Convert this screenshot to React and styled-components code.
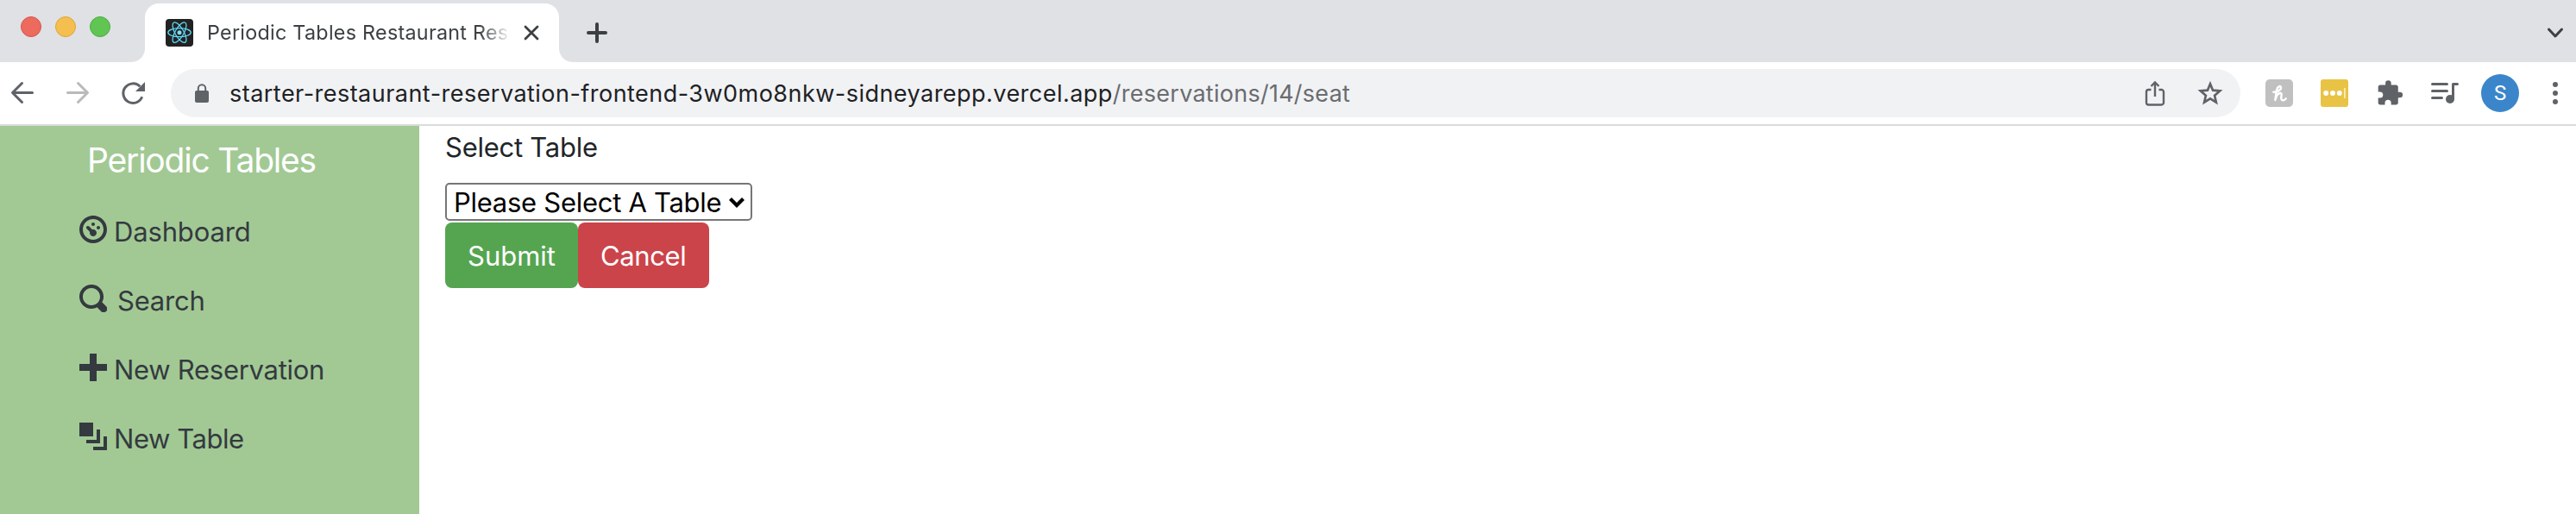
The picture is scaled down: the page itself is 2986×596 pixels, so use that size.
import React from 'react';
import styled, { createGlobalStyle } from 'styled-components';

const GlobalStyle = createGlobalStyle`
  *, *::before, *::after { box-sizing: border-box; }
  body {
    margin: 0;
    background: #fff;
    font-family: Inter, "Liberation Sans", sans-serif;
    color: #212529;
  }
`;

const Window = styled.div`
  display: flex;
  flex-direction: column;
  height: 596px;
  overflow: hidden;
`;

/* Browser chrome */

const TabStrip = styled.div`
  display: flex;
  height: 72px;
  flex: none;
  background: #dfe1e5;
`;

const TrafficLights = styled.div`
  display: flex;
  gap: 16px;
  width: 152px;
  padding: 19px 0 0 24px;
`;

const Light = styled.span`
  width: 24px;
  height: 24px;
  border-radius: 50%;
  background: ${(p) => p.$fill};
  border: 1px solid ${(p) => p.$edge};
`;

const TabCurve = styled.span`
  width: 16px;
  height: 16px;
  align-self: flex-end;
  background: radial-gradient(
    circle at ${(p) => (p.$side === 'left' ? '0 0' : '100% 0')},
    #dfe1e5 15.5px,
    #fff 16.5px
  );
`;

const Tab = styled.div`
  display: flex;
  align-items: center;
  width: 480px;
  margin-top: 4px;
  padding-left: 24px;
  border-radius: 16px 16px 0 0;
  background: #fff;
`;

const TabTitle = styled.span`
  width: 364px;
  margin-left: 16px;
  white-space: nowrap;
  font-size: 23.3px;
  line-height: 32px;
  letter-spacing: 0.28px;
  color: #3c4043;
  mask-image: linear-gradient(to right, #000 316px, transparent 352px);
`;

const NewTab = styled.div`
  display: flex;
  align-items: center;
  margin: 4px 0 0 12px;
`;

const TabSearch = styled(NewTab)`
  margin: 4px 12px 0 auto;
`;

const Toolbar = styled.div`
  display: flex;
  align-items: center;
  flex: none;
  height: 74px;
  padding: 0 8px 0 10px;
  border-bottom: 2px solid #dadbdc;
`;

const NavButtons = styled.div`
  display: flex;
  gap: 32px;
  margin-right: 28px;
`;

const Omnibox = styled.div`
  display: flex;
  align-items: center;
  flex: 1;
  height: 56px;
  padding: 0 19px 0 20px;
  border-radius: 28px;
  background: #f1f2f4;
`;

const Url = styled.div`
  flex: 1;
  margin-left: 16px;
  padding-top: 2px;
  font-size: 27px;
  line-height: 36px;
  white-space: nowrap;
  color: #202124;
  letter-spacing: 0.47px;
`;

const UrlPath = styled.span`
  color: #6a6c6f;
  letter-spacing: 0.26px;
`;

const OmniActions = styled.div`
  display: flex;
  gap: 32px;
`;

const Extensions = styled.div`
  display: flex;
  gap: 32px;
  margin: 0 26px 0 29px;
`;

const Avatar = styled.div`
  display: flex;
  align-items: center;
  justify-content: center;
  width: 44px;
  height: 44px;
  margin-right: 26px;
  border-radius: 50%;
  background: #3b86cb;
  color: #fff;
  font-family: Roboto, sans-serif;
  font-size: 24px;
  line-height: 44px;
`;

const Icon = styled.svg`
  display: block;
  flex: none;
  width: ${(p) => p.$size || 32}px;
  height: ${(p) => p.$size || 32}px;
  fill: none;
  stroke: ${(p) => p.$color || '#5f6368'};
  stroke-width: 3;
  stroke-linecap: round;
  stroke-linejoin: round;
`;

/* Page */

const Page = styled.div`
  display: flex;
  flex: 1;
`;

const Sidebar = styled.nav`
  width: 486px;
  background: #a2c994;
`;

const Brand = styled.div`
  padding: 16px 0 0 101px;
  font-size: 39px;
  line-height: 48px;
  letter-spacing: -1.2px;
  color: #fff;
`;

const Menu = styled.ul`
  margin: 19px 0 0;
  padding: 0 0 0 92px;
  list-style: none;
`;

const MenuItem = styled.li`
  display: flex;
  height: 80px;
  padding-top: 21px;
  font-size: 31px;
  line-height: 38px;
  letter-spacing: ${(p) => p.$spacing}px;
  color: #343a40;
`;

const MenuIcon = styled.svg`
  width: 32px;
  height: 32px;
  margin-right: ${(p) => p.$gap || 8}px;
  fill: currentColor;
`;

const Main = styled.main`
  padding: 1px 0 0 30px;
`;

const Label = styled.label`
  display: block;
  font-size: 31px;
  line-height: 48px;
  letter-spacing: -0.25px;
`;

const SelectWrap = styled.div`
  position: relative;
  width: 356px;
  height: 44px;
  margin: 17px 0 2px;
`;

const Select = styled.select`
  display: block;
  width: 356px;
  height: 44px;
  padding: 1px 0 0 8px;
  appearance: none;
  border: 2px solid #767676;
  border-radius: 5px;
  background: #fff;
  color: #000;
  font-family: inherit;
  font-size: 31px;
  line-height: 40px;
  letter-spacing: -0.28px;
`;

const SelectArrow = styled.svg`
  position: absolute;
  right: 8px;
  top: 15px;
  width: 20px;
  height: 16px;
  fill: none;
  stroke: #000;
  stroke-width: 4.2;
  pointer-events: none;
`;

const Actions = styled.div`
  display: flex;
`;

const Button = styled.button`
  width: ${(p) => p.$width}px;
  height: 76px;
  padding: 1px 0 0 26px;
  border: 0;
  border-radius: 8px;
  background: ${(p) => p.$bg};
  color: #fff;
  font-family: inherit;
  font-size: 31px;
  line-height: 75px;
  letter-spacing: ${(p) => p.$spacing}px;
  text-align: left;
`;

const menu = [
  {
    label: 'Dashboard',
    spacing: -0.15,
    gap: 8,
    d: 'M4 0c-2.2 0-4 1.8-4 4s1.8 4 4 4 4-1.8 4-4-1.8-4-4-4zm0 1c1.66 0 3 1.34 3 3s-1.34 3-3 3-3-1.34-3-3 1.34-3 3-3zm0 1c-.28 0-.5.22-.5.5s.22.5.5.5.5-.22.5-.5-.22-.5-.5-.5zm-1.66 1a.5.5 0 0 0-.19.84l.91.91c-.02.08-.06.16-.06.25 0 .55.45 1 1 1s1-.45 1-1-.45-1-1-1c-.09 0-.17.04-.25.06l-.91-.91a.5.5 0 0 0-.44-.16.5.5 0 0 0-.06 0zm3.16 0c-.28 0-.5.22-.5.5s.22.5.5.5.5-.22.5-.5-.22-.5-.5-.5z',
  },
  {
    label: 'Search',
    spacing: -0.2,
    gap: 12,
    d: 'M3.5 0c-1.93 0-3.5 1.57-3.5 3.5s1.57 3.5 3.5 3.5c.59 0 1.17-.14 1.66-.41a1 1 0 0 0 .13.13l1 1a1.02 1.02 0 1 0 1.44-1.44l-1-1a1 1 0 0 0-.16-.13c.27-.49.44-1.06.44-1.66 0-1.93-1.55-3.5-3.5-3.5zm0 1c1.39 0 2.5 1.11 2.5 2.5 0 .66-.24 1.27-.66 1.72-.01.01-.02.02-.03.03a1 1 0 0 0-.13.13c-.44.4-1.04.63-1.69.63-1.39 0-2.5-1.11-2.5-2.5s1.11-2.5 2.5-2.5z',
  },
  { label: 'New Reservation', spacing: -0.28, gap: 8, d: 'M3 0v3h-3v2h3v3h2v-3h3v-2h-3v-3z' },
  {
    label: 'New Table',
    spacing: -0.45,
    gap: 8,
    d: 'M0 0v4h4v-4zM5 2v3h-3v1h4v-4zM7 4v3h-3v1h4v-4z',
  },
];

const ReactLogo = () => (
  <Icon viewBox="0 0 32 32" $color="#61dafb">
    <rect width="32" height="32" rx="4" fill="#222" stroke="none" />
    <circle cx="16" cy="15.7" r="2.5" fill="#7fdcf7" stroke="none" />
    <g strokeWidth="1.25">
      {[0, 60, 120].map((a) => (
        <ellipse key={a} cx="16" cy="15.7" rx="13.2" ry="5" transform={`rotate(${a} 16 15.7)`} />
      ))}
    </g>
  </Icon>
);

export default function App() {
  return (
    <Window>
      <GlobalStyle />
      <TabStrip>
        <TrafficLights>
          <Light $fill="#ed6a5e" $edge="#d8554a" />
          <Light $fill="#f5bf4f" $edge="#dca53c" />
          <Light $fill="#61c554" $edge="#4cac3f" />
        </TrafficLights>
        <TabCurve $side="left" />
        <Tab>
          <ReactLogo />
          <TabTitle>Periodic Tables Restaurant Rese</TabTitle>
          <Icon $size={24} viewBox="0 0 24 24" $color="#3c4043">
            <path d="M5 5l14 14M19 5L5 19" strokeWidth="2.8" />
          </Icon>
        </Tab>
        <TabCurve $side="right" />
        <NewTab>
          <Icon viewBox="0 0 32 32" $color="#3c4043">
            <path d="M16 6v20M6 16h20" strokeWidth="4" />
          </Icon>
        </NewTab>
        <TabSearch>
          <Icon $size={24} viewBox="0 0 24 24" $color="#3c4043">
            <path d="M4.5 8l7.5 8 7.5-8" />
          </Icon>
        </TabSearch>
      </TabStrip>

      <Toolbar>
        <NavButtons>
          <Icon viewBox="0 0 32 32">
            <path d="M27.5 15.5H5M15.5 4.5l-11 11 11 11" />
          </Icon>
          <Icon viewBox="0 0 32 32" $color="#bababb">
            <path d="M4.5 15.5H27M16.5 4.5l11 11-11 11" />
          </Icon>
          <Icon viewBox="0 0 32 32">
            <path d="M24.3 8.3A11.3 11.3 0 1 0 26.7 20.3" strokeLinecap="butt" />
            <path d="M30 3v11H19z" fill="#5f6368" stroke="none" />
          </Icon>
        </NavButtons>
        <Omnibox>
          <Icon viewBox="0 0 32 32">
            <rect x="8" y="13" width="16" height="14" rx="2" fill="#5f6368" stroke="none" />
            <path d="M11.8 14v-3.5a4.2 4.2 0 0 1 8.4 0V14" strokeWidth="2" />
          </Icon>
          <Url>
            starter-restaurant-reservation-frontend-3w0mo8nkw-sidneyarepp.vercel.app
            <UrlPath>/reservations/14/seat</UrlPath>
          </Url>
          <OmniActions>
            <Icon viewBox="0 0 32 32">
              <path
                d="M11.5 12H8.5a2.5 2.5 0 0 0-2.5 2.5V27a2.5 2.5 0 0 0 2.5 2.5h15A2.5 2.5 0 0 0 26 27V14.5a2.5 2.5 0 0 0-2.5-2.5H20.5M16 20V4M11.5 8L16 3.5 20.500 8"
                strokeWidth="2.4"
                strokeLinecap="butt"
                strokeLinejoin="miter"
              />
            </Icon>
            <Icon viewBox="0 0 32 32">
              <path
                d="M16 5.2l3.1 7.5 8.1.7-6.1 5.3 1.8 7.9-6.9-4.2-6.9 4.2 1.8-7.9-6.1-5.3 8.1-.7z"
                strokeWidth="2.7"
                strokeLinejoin="miter"
              />
            </Icon>
          </OmniActions>
        </Omnibox>
        <Extensions>
          <Icon viewBox="0 0 32 32" $color="#fff">
            <rect width="32" height="32" rx="5" fill="#c0c0c0" stroke="none" />
            <path
              d="M9.3 14.7C13 15.2 18.5 12.5 18 9.5 17.5 6.8 14 8 13 12.5L11.3 24C12.5 19.5 15 15.8 17.5 16 20 16.2 17.5 20.5 18.5 23 19.3 25 22 24.8 23.7 22.3"
              strokeWidth="2.4"
            />
          </Icon>
          <Icon viewBox="0 0 32 32">
            <rect width="32" height="32" rx="3" fill="#e8c345" stroke="none" />
            <g fill="#fff" stroke="none">
              <circle cx="6.2" cy="16" r="3" />
              <circle cx="14" cy="16" r="3" />
              <circle cx="21.8" cy="16" r="3" />
              <rect x="27" y="10" width="1.8" height="12" fill="#fbeebb" />
            </g>
          </Icon>
          <Icon viewBox="0 0 32 32">
            <path
              d="M27.8 14.7h-2V9.3a2.700 2.7 0 0 0-2.7-2.7h-5.4V4.5a3.3 3.3 0 0 0-6.6 0v2.1H5.3a2.6 2.6 0 0 0-2.6 2.7v5.1h2a3.6 3.6 0 0 1 0 7.2h-2v5.1a2.7 2.7 0 0 0 2.6 2.7h5.2v-2a3.6 3.6 0 0 1 7.2 0v2h5.4a2.7 2.7 0 0 0 2.7-2.7v-5.4h2a3.3 3.3 0 0 0 0-6.600z"
              fill="#5f6368"
              stroke="none"
            />
          </Icon>
          <Icon viewBox="0 0 32 32">
            <path d="M1.5 5.5h17M1.5 13.5h17M1.5 21.5h11M25.5 22V5.5h5" />
            <circle cx="22" cy="23" r="5" fill="#5f6368" stroke="none" />
          </Icon>
        </Extensions>
        <Avatar>S</Avatar>
        <Icon viewBox="0 0 32 32">
          <g fill="#5f6368" stroke="none">
            <circle cx="16" cy="6" r="3" />
            <circle cx="16" cy="16" r="3" />
            <circle cx="16" cy="26" r="3" />
          </g>
        </Icon>
      </Toolbar>

      <Page>
        <Sidebar>
          <Brand>Periodic Tables</Brand>
          <Menu>
            {menu.map((item) => (
              <MenuItem key={item.label} $spacing={item.spacing}>
                <MenuIcon viewBox="0 0 8 8" $gap={item.gap}>
                  <path d={item.d} />
                </MenuIcon>
                {item.label}
              </MenuItem>
            ))}
          </Menu>
        </Sidebar>
        <Main>
          <Label htmlFor="table">Select Table</Label>
          <SelectWrap>
            <Select id="table">
              <option>Please Select A Table</option>
            </Select>
            <SelectArrow viewBox="0 0 20 16">
              <path d="M2.5 3.5l7.5 7.5 7.5-7.5" />
            </SelectArrow>
          </SelectWrap>
          <Actions>
            <Button $width={154} $bg="#55a550" $spacing={0}>
              Submit
            </Button>
            <Button $width={152} $bg="#cb444a" $spacing={-0.4}>
              Cancel
            </Button>
          </Actions>
        </Main>
      </Page>
    </Window>
  );
}
